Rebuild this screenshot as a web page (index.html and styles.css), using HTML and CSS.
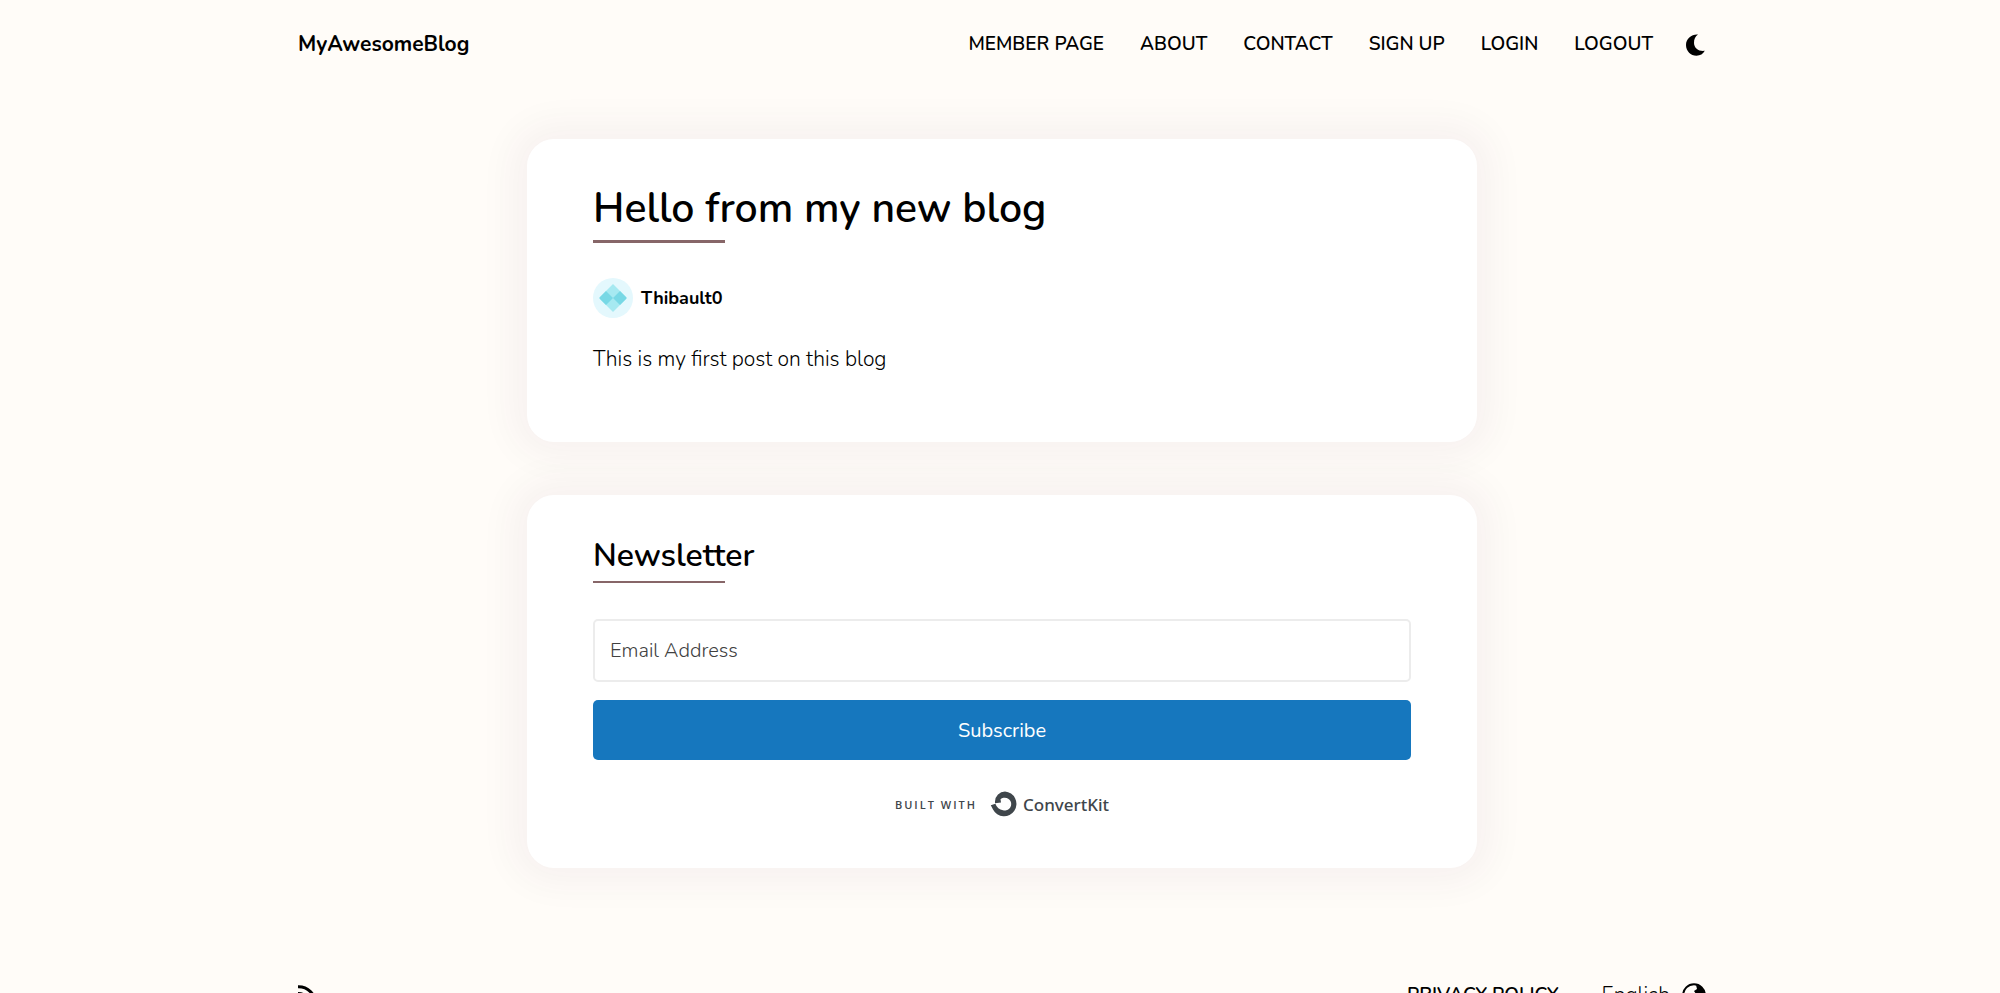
FILE: index.html
```html
<!DOCTYPE html>
<html lang="en">
<head>
<meta charset="utf-8">
<meta name="viewport" content="width=device-width, initial-scale=1">
<title>Hello from my new blog</title>
<link rel="stylesheet" href="styles.css">
</head>
<body>
<div class="page">
  <header class="header">
    <a class="brand" href="#">MyAwesomeBlog</a>
    <nav class="nav">
      <a href="#">MEMBER PAGE</a>
      <a href="#">ABOUT</a>
      <a href="#">CONTACT</a>
      <a href="#">SIGN UP</a>
      <a href="#">LOGIN</a>
      <a href="#">LOGOUT</a>
      <button class="theme" type="button" aria-label="Dark mode">
        <svg viewBox="0 0 20 22" width="20" height="22"><path d="M12 0.600C6 0 0 4.500 0 11C0 17.200 4.800 21.700 10.500 21.700C14.200 21.700 17.200 20 18.800 16.800C13 17.600 8.200 14.500 8 9C7.900 5.500 9.400 2.300 12 0.600Z" fill="#000"/></svg>
      </button>
    </nav>
  </header>

  <main class="main">
    <article class="card post">
      <h1 class="title">Hello from my new blog</h1>
      <a class="author" href="#">
        <svg viewBox="0 0 40 40" width="40" height="40" aria-hidden="true">
          <circle cx="20" cy="20" r="20" fill="#e4f8fd"/>
          <path d="M20 6L34 20L20 34L6 20Z" fill="#a6e9f1"/>
          <path d="M13 13L20 20L13 27L7 21Q6 20 7 19ZM27 13L33 19Q34 20 33 21L27 27L20 20Z" fill="#78d8e5"/>
        </svg>
        <span>Thibault0</span>
      </a>
      <p class="text">This is my first post on this blog</p>
    </article>

    <section class="card newsletter">
      <h2 class="subtitle">Newsletter</h2>
      <form class="form">
        <input class="email" type="email" placeholder="Email Address" aria-label="Email Address">
        <button class="subscribe" type="submit">Subscribe</button>
      </form>
      <a class="built" href="#">
        <span class="built-label">BUILT WITH</span>
        <svg viewBox="0 0 28 26" width="28" height="26" aria-hidden="true">
          <path d="M5 10.500A10.200 10.200 0 0 1 15 0.500A12.400 12.400 0 1 1 3 18.500L0.800 14.200L5.400 12.800Q7.500 18.800 13 19.200A6.400 6.400 0 1 0 10.500 8.300L11 11.500L5 12.200Z" fill="#3f464b"/>
        </svg>
        <span class="built-name">ConvertKit</span>
      </a>
    </section>
  </main>

  <footer class="footer">
    <a class="rss" href="#" aria-label="RSS">
      <svg viewBox="0 0 20 20" width="20" height="20"><path d="M0 1.800A17 17 0 0 1 17.500 19M0 8.500A10.500 10.500 0 0 1 11 19" fill="none" stroke="#000" stroke-width="3"/><circle cx="2.500" cy="16.500" r="2.500"/></svg>
    </a>
    <div class="footer-links">
      <a class="privacy" href="#">PRIVACY POLICY</a>
      <button class="language" type="button">
        <span>English</span>
        <svg viewBox="0 0 24 24" width="24" height="24" aria-hidden="true"><circle cx="12" cy="12" r="10.800" fill="none" stroke="#000" stroke-width="2"/><path d="M14 2L20 4.500L23 12L20 14L17 10L14 11L12 8L15 6ZM2 10L8 12L10 16L8 21L4 18Z"/></svg>
      </button>
    </div>
  </footer>
</div>
</body>
</html>
```
FILE: styles.css
```css
* {
  box-sizing: border-box;
}

body {
  margin: 0;
  background: #fffcf8;
  color: #000;
  font-family: Nunito, Lato, "Open Sans", sans-serif;
}

a {
  color: inherit;
  text-decoration: none;
}

button {
  padding: 0;
  border: 0;
  background: none;
  color: inherit;
  font: inherit;
  cursor: pointer;
}

svg {
  display: block;
}

.page {
  height: 100vh;
  padding-left: 4px;
  overflow: hidden;
}

.header,
.footer {
  display: flex;
  align-items: center;
  justify-content: space-between;
  width: 92%;
  max-width: 1408px;
  margin: 0 auto;
}

.header {
  height: 88px;
}

.brand {
  font-size: 21px;
  font-weight: 700;
}

.nav {
  display: flex;
  align-items: center;
  gap: 36px;
  font-size: 19px;
  font-weight: 600;
}

.theme {
  margin: 2px 0 0 -3px;
}

.main {
  display: grid;
  gap: 53px;
  width: 92%;
  max-width: 950px;
  margin: 51px auto 0;
}

.card {
  padding: 0 66px;
  border-radius: 27px;
  background: #fff;
  box-shadow: 0 0 36px 16px rgba(80, 20, 60, 0.045);
}

.post {
  padding-top: 42px;
  padding-bottom: 67px;
}

.title,
.subtitle {
  margin: 0;
  font-weight: 600;
}

.title::after,
.subtitle::after {
  content: "";
  display: block;
  width: 132px;
  background: #876668;
}

.title {
  font-size: 41px;
  line-height: 56px;
}

.title::after {
  height: 3px;
  margin-top: 3px;
}

.author {
  display: flex;
  align-items: center;
  gap: 8px;
  margin-top: 35px;
  font-size: 18px;
  font-weight: 700;
}

.text {
  margin: 25px 0 0;
  font-size: 21px;
  font-weight: 300;
  line-height: 32px;
}

.newsletter {
  padding-top: 39px;
  padding-bottom: 51px;
}

.subtitle {
  font-size: 32px;
  line-height: 44px;
}

.subtitle::after {
  height: 2px;
  margin-top: 3px;
}

.form {
  display: grid;
  gap: 18px;
  margin-top: 36px;
}

.email {
  width: 100%;
  height: 63px;
  padding: 0 15px;
  border: 2px solid #ececec;
  border-radius: 5px;
  background: #fff;
  color: #000;
  font: inherit;
  font-size: 20px;
  font-weight: 300;
}

.email::placeholder {
  color: #404040;
  opacity: 1;
}

.subscribe {
  height: 60px;
  border-radius: 5px;
  background: #1677be;
  color: #fff;
  font-size: 20px;
}

.built {
  display: flex;
  align-items: center;
  justify-content: center;
  margin-top: 31px;
  color: #3f464b;
}

.built-label {
  margin-right: 13px;
  font-family: "Open Sans", sans-serif;
  font-size: 11px;
  font-weight: 600;
  letter-spacing: 2px;
}

.built-name {
  margin-left: 5px;
  font-family: "Noto Sans", sans-serif;
  font-size: 17px;
  font-weight: 500;
}

.footer {
  margin-top: 113px;
}

.footer-links {
  display: flex;
  align-items: center;
  gap: 43px;
}

.privacy {
  font-size: 19px;
  font-weight: 600;
}

.language {
  display: flex;
  align-items: center;
  gap: 12px;
  font-size: 21px;
  font-weight: 300;
}
```
